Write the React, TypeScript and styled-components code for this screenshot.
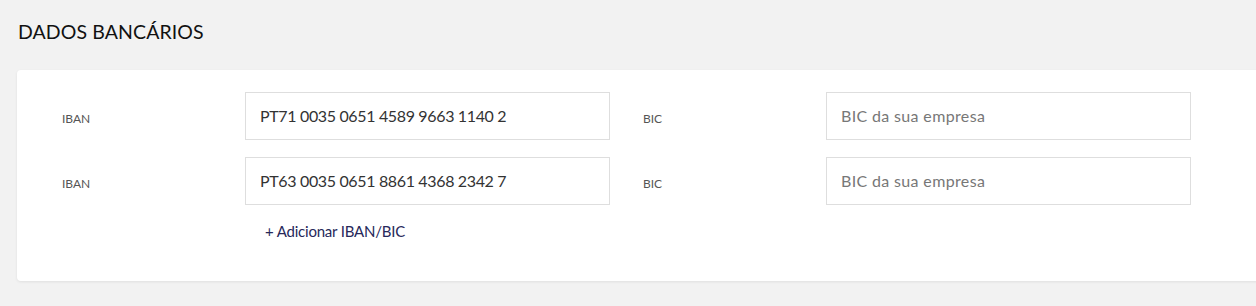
import React from 'react'
import styled, { createGlobalStyle } from 'styled-components'

const GlobalStyle = createGlobalStyle`
	html, body {
		margin: 0;
		padding: 0;
		background: #f2f2f2;
		overflow: hidden;
	}
	body {
		font-family: Lato, 'Open Sans', sans-serif;
	}
`

const Page = styled.div`
	padding: 19px 0 0 17px;
	height: 306px;
	box-sizing: border-box;
`

const Title = styled.h2`
	margin: 0 0 0 1px;
	font-size: 19.5px;
	font-weight: 400;
	line-height: 26px;
	color: #111;
	letter-spacing: 0.1px;
`

const Card = styled.section`
	margin-top: 25px;
	width: 1260px;
	background: #fff;
	border-radius: 4px;
	box-shadow: 0 1px 3px rgba(0, 0, 0, 0.08);
	padding: 22px 0 41px 45px;
	box-sizing: border-box;
`

const Grid = styled.div`
	display: grid;
	grid-template-columns: 183px 365px 33px 183px 365px;
	row-gap: 17px;
	align-items: center;
`

const Label = styled.label<{ $col: number }>`
	grid-column: ${(p) => p.$col};
	font-size: 12px;
	color: #555;
	padding-top: 5px;
`

const Input = styled.input<{ $col: number }>`
	grid-column: ${(p) => p.$col};
	height: 48px;
	box-sizing: border-box;
	border: 1px solid #dedede;
	border-radius: 0;
	padding: 0 14px 2px;
	font-family: Lato, sans-serif;
	font-size: 16px;
	letter-spacing: -0.35px;
	color: #333;
	outline: none;

	&::placeholder {
		color: #777;
		letter-spacing: 0.35px;
	}
`

const AddLink = styled.a`
	grid-column: 2;
	padding-left: 20px;
	margin-top: 0;
	font-size: 15px;
	line-height: 18px;
	letter-spacing: -0.2px;
	color: #27285a;
	text-decoration: none;
	cursor: pointer;
`

const accounts = [
	{ iban: 'PT71 0035 0651 4589 9663 1140 2', bic: '' },
	{ iban: 'PT63 0035 0651 8861 4368 2342 7', bic: '' },
]

const App = (): JSX.Element => (
	<Page>
		<GlobalStyle />
		<Title>DADOS BANCÁRIOS</Title>
		<Card>
			<Grid>
				{accounts.map((a, i) => (
					<React.Fragment key={i}>
						<Label $col={1}>IBAN</Label>
						<Input $col={2} defaultValue={a.iban} />
						<Label $col={4}>BIC</Label>
						<Input $col={5} defaultValue={a.bic} placeholder="BIC da sua empresa" />
					</React.Fragment>
				))}
				<AddLink>+ Adicionar IBAN/BIC</AddLink>
			</Grid>
		</Card>
	</Page>
)

export default App
